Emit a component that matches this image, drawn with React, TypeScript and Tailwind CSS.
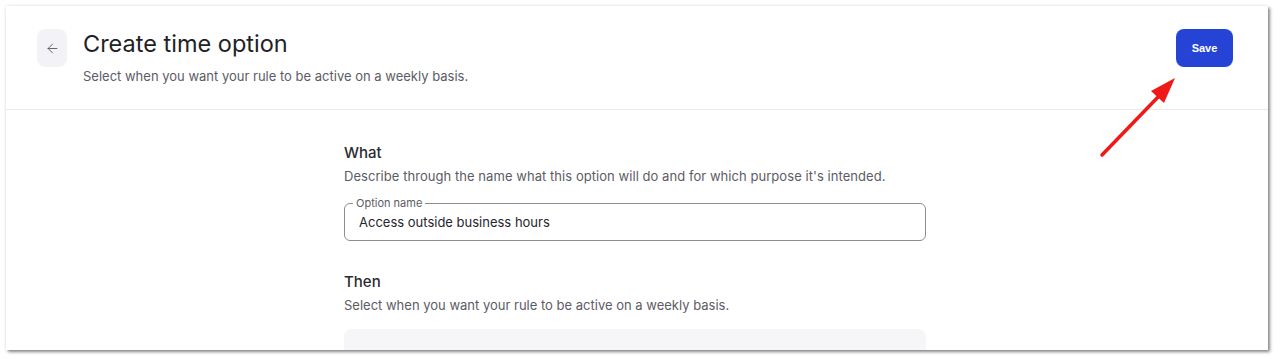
import { ArrowLeft } from 'lucide-react'

// Create time option — header with back button + Save, form column below.

export default function App() {
  return (
    <div className="relative h-[359px] w-full overflow-hidden bg-white font-['Inter',sans-serif]">
      <div className="ml-[6px] mt-[6px] h-[344px] w-[1262px] overflow-hidden bg-white shadow-[2px_2px_3px_rgba(0,0,0,0.45),0_0_3px_rgba(0,0,0,0.12)]">
        {/* Header */}
        <header className="flex h-[104px] items-start justify-between border-b border-[#e9e9ec] pl-[31px] pr-[35px] pt-[23px]">
          <div className="flex items-start gap-4">
            <button
              type="button"
              aria-label="Back"
              className="flex h-[38px] w-[30px] items-center justify-center rounded-lg bg-[#f2f2f7] text-[#5e5e6a]"
            >
              <ArrowLeft size={15} strokeWidth={1.5} />
            </button>
            <div>
              <h1 className="text-[23.5px] leading-[30px] font-normal text-[#222226]">Create time option</h1>
              <p className="mt-[9px] text-[13px] leading-4 text-[#5c5c66]">
                Select when you want your rule to be active on a weekly basis.
              </p>
            </div>
          </div>
          <button
            type="button"
            className="h-[38px] w-[57px] rounded-lg bg-[#2544d6] font-['Liberation_Sans',sans-serif] text-[11px] font-bold text-white"
          >
            Save
          </button>
        </header>

        {/* Form */}
        <div className="ml-[338px] w-[582px] pt-[32px]">
          <section>
            <h2 className="text-[15px] leading-[22px] font-medium text-[#2a2a30]">What</h2>
            <p className="mt-[2px] text-[13px] leading-5 tracking-[0.004em] text-[#5c5c66]">
              Describe through the name what this option will do and for which purpose it's intended.
            </p>
            <fieldset className="mt-[11px] h-[44px] rounded-md border border-[#8c8c94] px-[14px]">
              <legend className="ml-[-6px] px-[3px] text-[11px] leading-3 text-[#5c5c66]">Option name</legend>
              <div className="mt-[3px] text-[13px] leading-5 text-[#26262c]">Access outside business hours</div>
            </fieldset>
          </section>

          <section className="mt-[30px]">
            <h2 className="text-[15px] leading-[22px] font-medium text-[#2a2a30]">Then</h2>
            <p className="mt-[2px] text-[13px] leading-5 text-[#5c5c66]">
              Select when you want your rule to be active on a weekly basis.
            </p>
            <div className="mt-[14px] h-[60px] rounded-lg bg-[#f6f6f8]" />
          </section>
        </div>
      </div>

      {/* Annotation arrow */}
      <svg className="pointer-events-none absolute left-0 top-0" width="1280" height="359" aria-hidden>
        <line x1="1102" y1="155" x2="1160" y2="95" stroke="#f01818" strokeWidth="3.5" strokeLinecap="round" />
        <polygon points="1175,78 1151,91 1164,103" fill="#f01818" />
      </svg>
    </div>
  )
}
